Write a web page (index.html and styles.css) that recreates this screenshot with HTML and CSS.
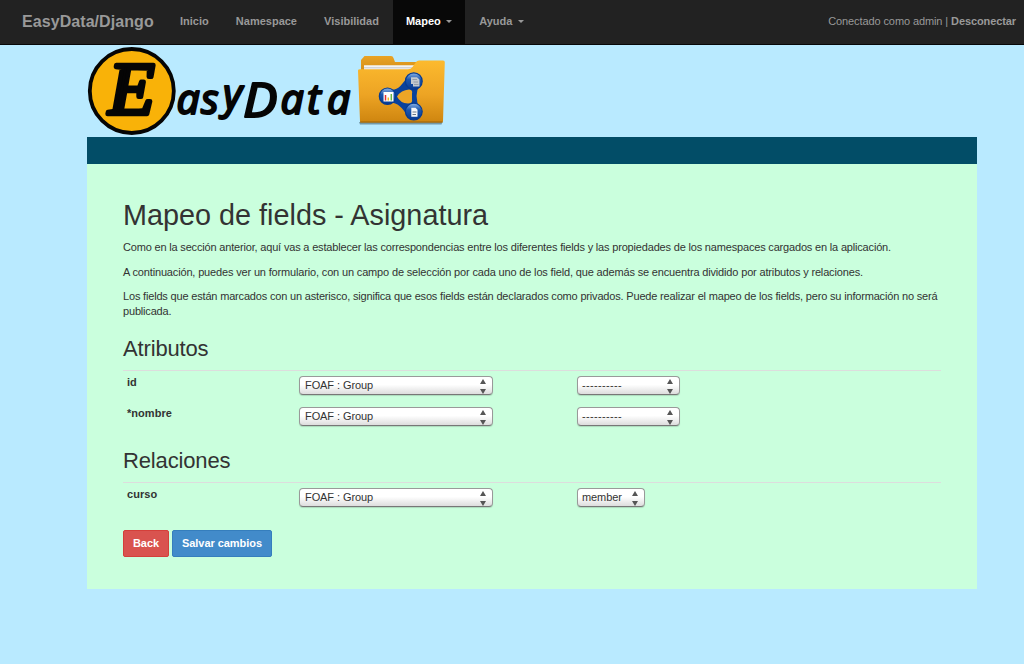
FILE: index.html
```html
<!DOCTYPE html>
<html lang="es">
<head>
<meta charset="utf-8">
<title>EasyData/Django</title>
<link rel="stylesheet" href="styles.css">
</head>
<body>
<nav class="navbar">
  <a class="brand">EasyData/Django</a>
  <ul class="menu">
    <li class="item">Inicio</li>
    <li class="item">Namespace</li>
    <li class="item">Visibilidad</li>
    <li class="item active">Mapeo<span class="caret"></span></li>
    <li class="item">Ayuda<span class="caret"></span></li>
  </ul>
  <div class="session">Conectado como admin | <b>Desconectar</b></div>
</nav>
<div class="page">
  <header class="logo">
    <svg width="360" height="92" viewBox="87 45 360 92">
      <defs>
        <linearGradient id="front" x1="0" y1="0" x2="0" y2="1"><stop offset="0" stop-color="#fcba2e"/><stop offset=".55" stop-color="#eda424"/><stop offset="1" stop-color="#ce850f"/></linearGradient>
        <linearGradient id="back" x1="0" y1="0" x2="0" y2="1"><stop offset="0" stop-color="#e9a325"/><stop offset="1" stop-color="#c8820f"/></linearGradient>
        <linearGradient id="ball" x1="0" y1="0" x2="0" y2="1"><stop offset="0" stop-color="#8db4e6"/><stop offset=".4" stop-color="#1b57ae"/><stop offset="1" stop-color="#073a92"/></linearGradient>
      </defs>
      <circle cx="131.800" cy="91" r="42" fill="#f9b208" stroke="#050505" stroke-width="3.800"/>
      <text class="initial" transform="translate(108.500 114) scale(1.02 1)">E</text>
      <text class="wordmark" y="114" x="176.500 201">as</text>
      <text class="wordmark" y="109" x="223">y</text>
      <text class="big" transform="translate(243 116.500) scale(1.1 1)">D</text>
      <text class="wordmark" y="114" x="280.500 307 327">ata</text>
      <path d="M359 122H442.500L441.500 124.500H360Z" fill="#4d6d79" opacity=".65"/>
      <path d="M361 70V60L364.500 56H391Q393 56 393.500 58L395 62H417V80H361Z" fill="url(#back)"/>
      <path d="M364 65.300H414V72H364Z" fill="#f4f4f4"/>
      <path d="M364 67.800H413" stroke="#bbb" stroke-width=".8"/>
      <path d="M358 70.500Q358 69.300 360 69.300H408Q411 69.300 412.500 67L416 62Q417 60.500 419 60.500H443Q445 60.500 444.800 62.500L443 121Q443 122.500 441.500 122.500H361.500Q360 122.500 360 121Z" fill="url(#front)"/>
      <path d="M360 122H442.500" stroke="#9b6307" stroke-width="1"/>
      <path d="M387 89C398 92 400 86 408 77L420 84Q413 96 420 109L408 117C402 106 395 101 387 103Z" fill="#0a429c"/>
      <path d="M397 96.500Q401 90 409 89.500Q413 89.500 412 94V99Q413 103.500 408 103.500Q400 103 397 96.500Z" fill="#eda526"/>
      <g fill="url(#ball)" stroke="#073b91" stroke-width="1.200"><circle cx="387.500" cy="96.200" r="8.200"/><circle cx="413.800" cy="81.200" r="8.400"/><circle cx="413.800" cy="111.600" r="8.400"/></g>
      <path d="M383.500 92H393.500V101.500H383.500Z" fill="#fff"/>
      <path d="M385.500 95V100.500" stroke="#e33131" stroke-width="1.500"/><path d="M388.300 97.500V100.500" stroke="#edbd25" stroke-width="1.500"/><path d="M391.300 94V100.500" stroke="#68b542" stroke-width="1.500"/>
      <path d="M411 77.300H417L419.500 79.500V86.500H413V84H411Z" fill="#c3c9cf"/>
      <path d="M412.500 79.500H417M413.500 82H418M414 84.500H418.500" stroke="#89939f" stroke-width=".8"/>
      <path d="M411.300 107.800H415.500L417.500 109.800V116.800H411.300Z" fill="#f8f8f8"/>
      <path d="M412.500 112H416.500M412.500 114.500H416" stroke="#6c7887" stroke-width="1"/>
    </svg>
  </header>
  <div class="bar"></div>
  <main class="content">
    <h1>Mapeo de fields - Asignatura</h1>
    <p>Como en la sección anterior, aquí vas a establecer las correspondencias entre los diferentes fields y las propiedades de los namespaces cargados en la aplicación.</p>
    <p class="looser">A continuación, puedes ver un formulario, con un campo de selección por cada uno de los field, que además se encuentra dividido por atributos y relaciones.</p>
    <p>Los fields que están marcados con un asterisco, significa que esos fields están declarados como privados. Puede realizar el mapeo de los fields, pero su información no será publicada.</p>
    <h2>Atributos</h2>
    <div class="rows">
      <div class="row"><label>id</label><div class="cell"><div class="select wide">FOAF : Group<span class="arrows"></span></div></div><div class="select mid dashes">----------<span class="arrows"></span></div></div>
      <div class="row"><label>*nombre</label><div class="cell"><div class="select wide">FOAF : Group<span class="arrows"></span></div></div><div class="select mid dashes">----------<span class="arrows"></span></div></div>
    </div>
    <h2 class="second">Relaciones</h2>
    <div class="rows">
      <div class="row"><label>curso</label><div class="cell"><div class="select wide">FOAF : Group<span class="arrows"></span></div></div><div class="select small">member<span class="arrows"></span></div></div>
    </div>
    <div class="buttons"><button class="btn danger">Back</button><button class="btn primary">Salvar cambios</button></div>
  </main>
</div>
</body>
</html>
```
FILE: styles.css
```css
* { box-sizing: border-box; }
body { margin: 0; background: #b9eaff; color: #333; font: 11px/15px "Liberation Sans", Arial, sans-serif; min-height: 664px; }
.navbar { height: 45px; background: #222; border-bottom: 1px solid #080808; display: flex; align-items: stretch; color: #999; line-height: 43px; padding: 0 8px 0 22px; }
.brand { font-size: 16px; font-weight: bold; width: 144.5px; letter-spacing: .07px; }
.menu { list-style: none; margin: 0; padding: 0; display: flex; font-weight: bold; }
.item { padding: 0 13.6px 0 13.5px; white-space: nowrap; }
.item.active { background: #080808; color: #fff; padding: 0 13px; margin-left: .4px; }
.active + .item { padding-left: 14px; }
.caret { display: inline-block; border: 3px solid transparent; border-top-color: #999; border-bottom: 0; margin-left: 5.5px; vertical-align: 2px; }
.session { margin-left: auto; letter-spacing: -.1px; }
.page { width: 890px; margin-left: 87px; }
.logo { height: 92px; }
.logo svg { display: block; }
.initial, .wordmark, .big { font-style: italic; font-weight: 400; fill: #050505; stroke: #050505; stroke-linejoin: round; }
.initial { font-family: "Liberation Serif", serif; font-size: 74px; stroke-width: 4.5px; }
.wordmark { font-family: "Noto Sans", sans-serif; font-size: 41px; stroke-width: 2px; }
.big { font-family: "Noto Sans", sans-serif; font-size: 47px; stroke-width: 2px; }
.bar { height: 27px; background: #024d67; }
.content { height: 425px; background: #caffdd; padding: 34px 36px 0; }
h1, h2 { font-weight: normal; margin: 0; transform-origin: 0 0; }
h1 { font-size: 30px; line-height: 33px; margin-bottom: 9px; transform: scaleX(.96); }
p { margin: 0 -5px 9.6px 0; letter-spacing: -.178px; }
.looser { letter-spacing: -.158px; }
h2 { font-size: 22px; line-height: 24px; margin-top: 18px; padding-bottom: 9px; border-bottom: 1px solid #ddd; letter-spacing: -.15px; }
.second { margin-top: 11px; }
.rows { padding-top: 5px; }
.row { display: flex; height: 31px; }
label { width: 176px; padding-left: 4px; font-weight: bold; line-height: 13px; letter-spacing: .05px; }
.cell { width: 278px; }
.select { position: relative; height: 19px; border: 1px solid #999; border-bottom-color: #777; border-radius: 4px; background: linear-gradient(#fff 45%, #ddd); line-height: 17px; padding-left: 5px; box-shadow: 0 1px 1px rgba(0,0,0,.15); white-space: nowrap; letter-spacing: -.08px; }
.dashes { letter-spacing: .35px; }
.wide { width: 194px; }
.mid { width: 103px; padding-left: 4px; }
.small { width: 68px; padding-left: 4px; }
.arrows::before, .arrows::after { content: ""; position: absolute; right: 6px; border: 3px solid transparent; }
.arrows::before { top: 2px; border-bottom: 5px solid #555; border-top: 0; }
.arrows::after { top: 12px; border-top: 5px solid #555; border-bottom: 0; }
.buttons { display: flex; gap: 3px; margin-top: 11px; }
.btn { height: 27px; border: 1px solid; border-radius: 2px; color: #fff; font: bold 11px "Liberation Sans", Arial, sans-serif; letter-spacing: -.05px; padding: 0 0 1px; }
.danger { width: 46px; background: #d9534f; border-color: #d43f3a; }
.primary { width: 100px; background: #428bca; border-color: #357ebd; }
```
